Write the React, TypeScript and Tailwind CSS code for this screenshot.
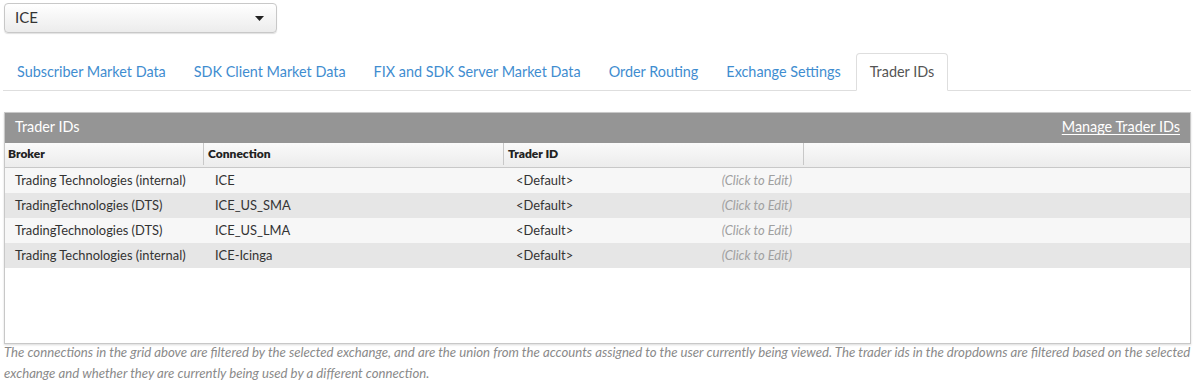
import React from "react";

const rows = [
  { broker: "Trading Technologies (internal)", conn: "ICE" },
  { broker: "TradingTechnologies (DTS)", conn: "ICE_US_SMA" },
  { broker: "TradingTechnologies (DTS)", conn: "ICE_US_LMA" },
  { broker: "Trading Technologies (internal)", conn: "ICE-Icinga" },
];

const tabs = [
  "Subscriber Market Data",
  "SDK Client Market Data",
  "FIX and SDK Server Market Data",
  "Order Routing",
  "Exchange Settings",
];

export default function App() {
  return (
    <div
      className="w-[1196px] h-[385px] bg-white overflow-hidden"
      style={{ fontFamily: "Lato, 'Noto Sans', sans-serif" }}
    >
      <div className="pl-[4px] pr-[5px] pt-[3px]">
        <div className="w-[273px] h-[30px] rounded-[4px] border border-[#c8c8c8] bg-gradient-to-b from-white to-[#ececec] shadow-[0_1px_1px_rgba(0,0,0,0.12)] flex items-center justify-between pl-[10px] pr-[12px]">
          <span className="text-[15px] text-[#333] mt-[-2px]">ICE</span>
          <svg width="9" height="5" viewBox="0 0 9 5">
            <path d="M0 0 L9 0 L4.5 5 Z" fill="#222" />
          </svg>
        </div>

        <div className="mt-[20px] flex items-end border-b border-[#dedede] h-[38px] ml-[-1px]">
          {tabs.map((t) => (
            <div
              key={t}
              className="h-[37px] px-[14px] flex items-center text-[14.4px] text-[#3f8dd0]"
            >
              {t}
            </div>
          ))}
          <div className="h-[38px] mb-[-1px] px-[13px] ml-[1px] flex items-center text-[14.4px] text-[#555] bg-white border border-[#dedede] border-b-white rounded-t-[4px]">
            Trader IDs
          </div>
        </div>

        <div className="mt-[21px] h-[232px] border border-[#c8c8c8] shadow-[0_1px_2px_rgba(0,0,0,0.15)] flex flex-col">
          <div className="h-[30px] bg-[#959595] flex items-center justify-between pl-[10px] pr-[10px] pb-[2px]">
            <span className="text-[14.4px] text-white">Trader IDs</span>
            <span className="text-[14.4px] text-white underline underline-offset-2">
              Manage Trader IDs
            </span>
          </div>
          <div className="h-[25px] pb-[2px] flex bg-gradient-to-b from-[#fafafa] to-[#ececec] border-b border-[#c8c8c8] text-[12px] font-extrabold text-[#222]">
            <div className="w-[199px] border-r border-[#c8c8c8] pl-[3px] flex items-center">Broker</div>
            <div className="w-[300px] border-r border-[#c8c8c8] pl-[4px] flex items-center">Connection</div>
            <div className="w-[300px] border-r border-[#c8c8c8] pl-[4px] flex items-center">Trader ID</div>
            <div className="flex-1" />
          </div>
          {rows.map((r, i) => (
            <div
              key={i}
              className={`h-[25px] flex items-center text-[12.9px] text-[#333] ${
                i % 2 === 0 ? "bg-[#f7f7f7]" : "bg-[#e6e6e6]"
              }`}
            >
              <div className="w-[199px] pl-[10px]">{r.broker}</div>
              <div className="w-[300px] pl-[11px]">{r.conn}</div>
              <div className="w-[300px] pl-[12px] pr-[12px] flex justify-between">
                <span>&lt;Default&gt;</span>
                <span className="italic text-[#a0a0a0]">(Click to Edit)</span>
              </div>
            </div>
          ))}
          <div className="flex-1 bg-white" />
        </div>

        <p className="mt-[-2px] text-[13.2px] leading-[21px] italic text-[#8a8a8a]">
          The connections in the grid above are filtered by the selected exchange, and are the union from the accounts assigned to the user currently being viewed. The trader ids in the dropdowns are filtered based on the selected exchange and whether they are currently being used by a different connection.
        </p>
      </div>
    </div>
  );
}
